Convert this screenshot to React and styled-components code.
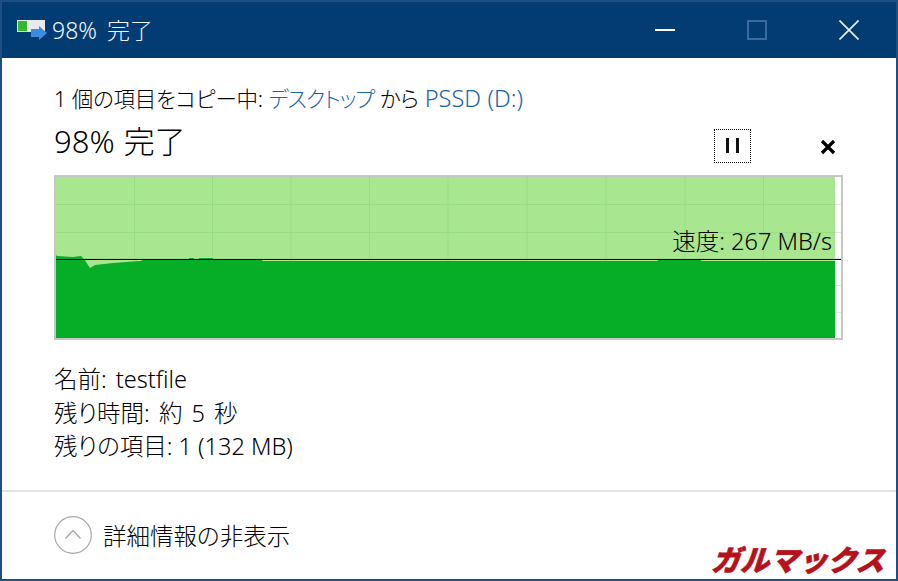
import styled, { createGlobalStyle } from "styled-components";

const Global = createGlobalStyle`
  html, body {
    margin: 0;
    padding: 0;
    background: #ffffff;
  }
`;

const Window = styled.div`
  width: 898px;
  height: 581px;
  box-sizing: border-box;
  border: 2px solid #1d4f82;
  background: #ffffff;
  display: flex;
  flex-direction: column;
  position: relative;
  overflow: hidden;
  color: #000000;
  font-family: "Noto Sans", "Noto Sans CJK JP", sans-serif;
  font-feature-settings: "palt";
`;

const TitleBar = styled.div`
  height: 56px;
  flex: none;
  background: #033c73;
  display: flex;
  align-items: center;
  padding: 0 37px 0 15px;
  color: #f2f6fa;
  font-size: 23px;
  font-weight: 300;
`;

const TitleIcon = styled.svg`
  width: 31px;
  height: 21px;
  margin-right: 4px;
  flex: none;
`;

const TitleText = styled.span`
  flex: 1;
  margin-top: -2px;
  word-spacing: 4px;
`;

const CaptionButtons = styled.div`
  display: flex;
  align-items: center;
  gap: 72px;
`;

const CaptionIcon = styled.svg`
  width: 20px;
  height: 20px;
  display: block;
`;

const Content = styled.div`
  flex: 1;
  padding: 25px 53px 0 52px;
  display: flex;
  flex-direction: column;
`;

const CopyLine = styled.div`
  height: 30px;
  font-size: 21.5px;
  line-height: 30px;
  font-weight: 300;
  letter-spacing: -0.25px;
  word-spacing: 0.5px;
`;

const Place = styled.span`
  color: #1a64a8;
  letter-spacing: ${(p) => (p.$kana ? "-1.1px" : "0")};
  font-size: ${(p) => (p.$kana ? "21.5px" : "23.5px")};
`;

const HeadingRow = styled.div`
  display: flex;
  align-items: center;
  height: 46px;
  margin-top: 3px;
`;

const Heading = styled.div`
  flex: 1;
  font-size: 31px;
  font-weight: 300;
  line-height: 40px;
  margin-top: 3px;
  word-spacing: 1px;
`;

const PauseButton = styled.div`
  width: 37px;
  height: 34px;
  box-sizing: border-box;
  border: 1px dotted #000000;
  display: flex;
  align-items: center;
  justify-content: center;
  gap: 7px;
  margin: 13px 0 0 -2px;
`;

const PauseBar = styled.span`
  width: 3px;
  height: 15px;
  background: #111111;
`;

const StopButton = styled.svg`
  width: 16px;
  height: 16px;
  margin: 15px 7px 0 69px;
`;

const Chart = styled.div`
  width: 789px;
  height: 165px;
  box-sizing: border-box;
  border: 2px solid #c4c8c4;
  margin-top: 13px;
  position: relative;
`;

const ChartSvg = styled.svg`
  display: block;
  width: 785px;
  height: 161px;
`;

const SpeedLabel = styled.div`
  position: absolute;
  right: 9px;
  top: 48px;
  font-size: 23.5px;
  line-height: 32px;
  font-weight: 300;
`;

const Details = styled.div`
  margin-top: 23px;
  font-size: 23.5px;
  line-height: 33.5px;
  font-weight: 300;
`;

const DetailRow = styled.div`
  word-spacing: ${(p) => (p.$wide ? "3px" : "0")};
`;

const Footer = styled.div`
  height: 89px;
  flex: none;
  border-top: 2px solid #e3e3e3;
  box-sizing: border-box;
  display: flex;
  align-items: center;
  padding: 0 0 2px 52px;
  font-size: 23.5px;
  font-weight: 300;
`;

const Chevron = styled.svg`
  width: 38px;
  height: 38px;
  margin-right: 11px;
  flex: none;
`;

const Watermark = styled.div`
  position: absolute;
  right: 8px;
  bottom: 5px;
  font-family: "Noto Sans CJK JP", sans-serif;
  font-feature-settings: normal;
  font-size: 29px;
  line-height: 32px;
  font-weight: 900;
  color: #b5121b;
  -webkit-text-stroke: 0.6px #b5121b;
  transform: skewX(-18deg);
`;

const plotTop =
  "M0 78 L1 79 L17 80 L25 79 L28 82 L34 91 L39 88 L57 86 L84 84 L89 82.5 L133 82.5 L133 81 L138 81 L138 82.5 L143 82.5 L143 81 L157 81 L157 83 L206 83 L207 84 L602 84 L602 83 L645 83 L645 84 L779 84";

const App = () => {
  const verticals = [78.5, 156.5, 235, 313.5, 392, 471, 550, 629, 707.5];
  const horizontals = [27, 55, 81, 108, 135];
  return (
    <Window>
      <Global />
      <TitleBar>
        <TitleIcon viewBox="0 0 31 21">
          <rect x="0" y="0" width="28" height="12" fill="#e8ebee" />
          <rect x="1" y="1" width="9" height="10" fill="#37b72f" />
          <path d="M14 9 H22 V6 L30 13 L22 20 V17 H14 Z" fill="#3b8de2" />
        </TitleIcon>
        <TitleText>98% 完了</TitleText>
        <CaptionButtons>
          <CaptionIcon viewBox="0 0 20 20">
            <rect x="0" y="9" width="20" height="2" fill="#ffffff" />
          </CaptionIcon>
          <CaptionIcon viewBox="0 0 20 20">
            <rect x="1" y="1" width="18" height="18" fill="none" stroke="#3a6a9e" strokeWidth="2" />
          </CaptionIcon>
          <CaptionIcon viewBox="0 0 20 20">
            <path d="M0.5 0.5 L19.5 19.5 M19.5 0.5 L0.5 19.5" stroke="#eef3f8" strokeWidth="1.6" />
          </CaptionIcon>
        </CaptionButtons>
      </TitleBar>
      <Content>
        <CopyLine>
          1 個の項目をコピー中: <Place $kana>デスクトップ</Place> から <Place>PSSD (D:)</Place>
        </CopyLine>
        <HeadingRow>
          <Heading>98% 完了</Heading>
          <PauseButton>
            <PauseBar />
            <PauseBar />
          </PauseButton>
          <StopButton viewBox="0 0 16 16">
            <path d="M2 2 L14 14 M14 2 L2 14" stroke="#000000" strokeWidth="3.2" />
          </StopButton>
        </HeadingRow>
        <Chart>
          <ChartSvg viewBox="0 0 785 161">
            <rect width="785" height="161" fill="#ffffff" />
            <rect width="779" height="161" fill="#a9e690" />
            {verticals.map((x) => (
              <line key={x} x1={x} x2={x} y1="0" y2="161" stroke="#98dd86" />
            ))}
            {horizontals.map((y) => (
              <g key={y}>
                <line x1="0" x2="779" y1={y + 0.5} y2={y + 0.5} stroke="#98dd86" />
                <line x1="779" x2="785" y1={y + 0.5} y2={y + 0.5} stroke="#e4e4e4" />
              </g>
            ))}
            <path d={`${plotTop} L779 161 L0 161 Z`} fill="#06ad27" />
            <line x1="0" x2="785" y1="82.5" y2="82.5" stroke="#000000" />
          </ChartSvg>
          <SpeedLabel>速度: 267 MB/s</SpeedLabel>
        </Chart>
        <Details>
          <DetailRow $wide>名前: testfile</DetailRow>
          <DetailRow $wide>残り時間: 約 5 秒</DetailRow>
          <DetailRow>残りの項目: 1 (132 MB)</DetailRow>
        </Details>
      </Content>
      <Footer>
        <Chevron viewBox="0 0 38 38">
          <circle cx="19" cy="19" r="18.3" fill="none" stroke="#a8a8a8" strokeWidth="1.2" />
          <path d="M11.5 22.5 L19 14.5 L26.5 22.5" fill="none" stroke="#a8a8a8" strokeWidth="1.4" />
        </Chevron>
        詳細情報の非表示
      </Footer>
      <Watermark>ガルマックス</Watermark>
    </Window>
  );
};

export default App;
